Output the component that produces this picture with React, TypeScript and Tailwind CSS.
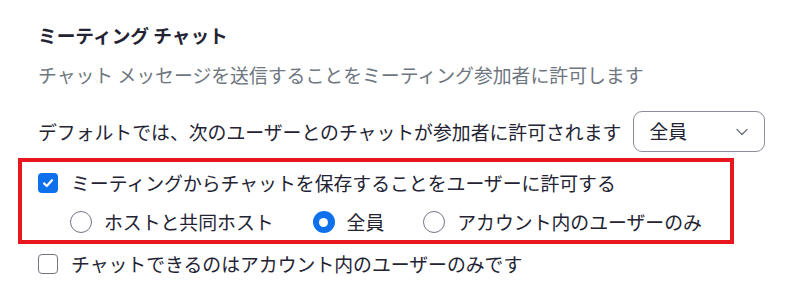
import { ChevronDown } from 'lucide-react';

const font = { fontFamily: '"Noto Sans CJK JP", "Noto Sans", sans-serif' };

function Checkbox({ checked }: { checked: boolean }) {
  return checked ? (
    <span className="flex h-[20px] w-[20px] shrink-0 items-center justify-center rounded-[4px] bg-[#0e71eb]">
      <svg width="14" height="14" viewBox="0 0 14 14" fill="none">
        <path d="M3 7.4 5.8 10 11 4.2" stroke="white" strokeWidth="2.2" strokeLinecap="round" strokeLinejoin="round" />
      </svg>
    </span>
  ) : (
    <span className="h-[20px] w-[20px] shrink-0 rounded-[4px] border-[1.5px] border-[#747487] bg-white" />
  );
}

function Radio({ checked, label }: { checked: boolean; label: string }) {
  return (
    <label className="flex items-center gap-[12px]">
      {checked ? (
        <span className="flex h-[22px] w-[22px] items-center justify-center rounded-full bg-[#0e71eb]">
          <span className="h-[9px] w-[9px] rounded-full bg-white" />
        </span>
      ) : (
        <span className="h-[22px] w-[22px] rounded-full border-[1.5px] border-[#747487] bg-white" />
      )}
      <span>{label}</span>
    </label>
  );
}

export default function App() {
  return (
    <div className="min-h-[301px] w-[804px] bg-white pl-[38px] pt-[21px] text-[18.85px] text-[#232333]" style={font}>
      <h2 className="text-[18.7px] font-bold leading-[28px] text-[#232333]">ミーティング チャット</h2>
      <p className="mt-[12px] leading-[28px] text-[#6e7680]">
        チャット メッセージを送信することをミーティング参加者に許可します
      </p>

      <div className="mt-[22px] flex h-[41px] items-center gap-[12px]">
        <span className="leading-[28px]">デフォルトでは、次のユーザーとのチャットが参加者に許可されます</span>
        <button className="flex h-[41px] w-[132px] items-center justify-between rounded-[9px] border border-[#8a8f98] pl-[15px] pr-[12px]">
          <span>全員</span>
          <ChevronDown size={20} strokeWidth={1.6} className="text-[#6e7680]" />
        </button>
      </div>

      <div className="-ml-[20px] mt-[6px] w-[716px] border-4 border-[#e8161d] pb-[4px] pl-[16px] pt-[7px]">
        <div className="flex h-[28px] items-center gap-[13px]">
          <Checkbox checked />
          <span>ミーティングからチャットを保存することをユーザーに許可する</span>
        </div>
        <div className="ml-[32px] mt-[11px] flex h-[28px] items-center gap-[39px]">
          <Radio checked={false} label="ホストと共同ホスト" />
          <Radio checked label="全員" />
          <Radio checked={false} label="アカウント内のユーザーのみ" />
        </div>
      </div>

      <div className="mt-[6px] flex h-[28px] items-center gap-[13px]">
        <Checkbox checked={false} />
        <span>チャットできるのはアカウント内のユーザーのみです</span>
      </div>
    </div>
  );
}
